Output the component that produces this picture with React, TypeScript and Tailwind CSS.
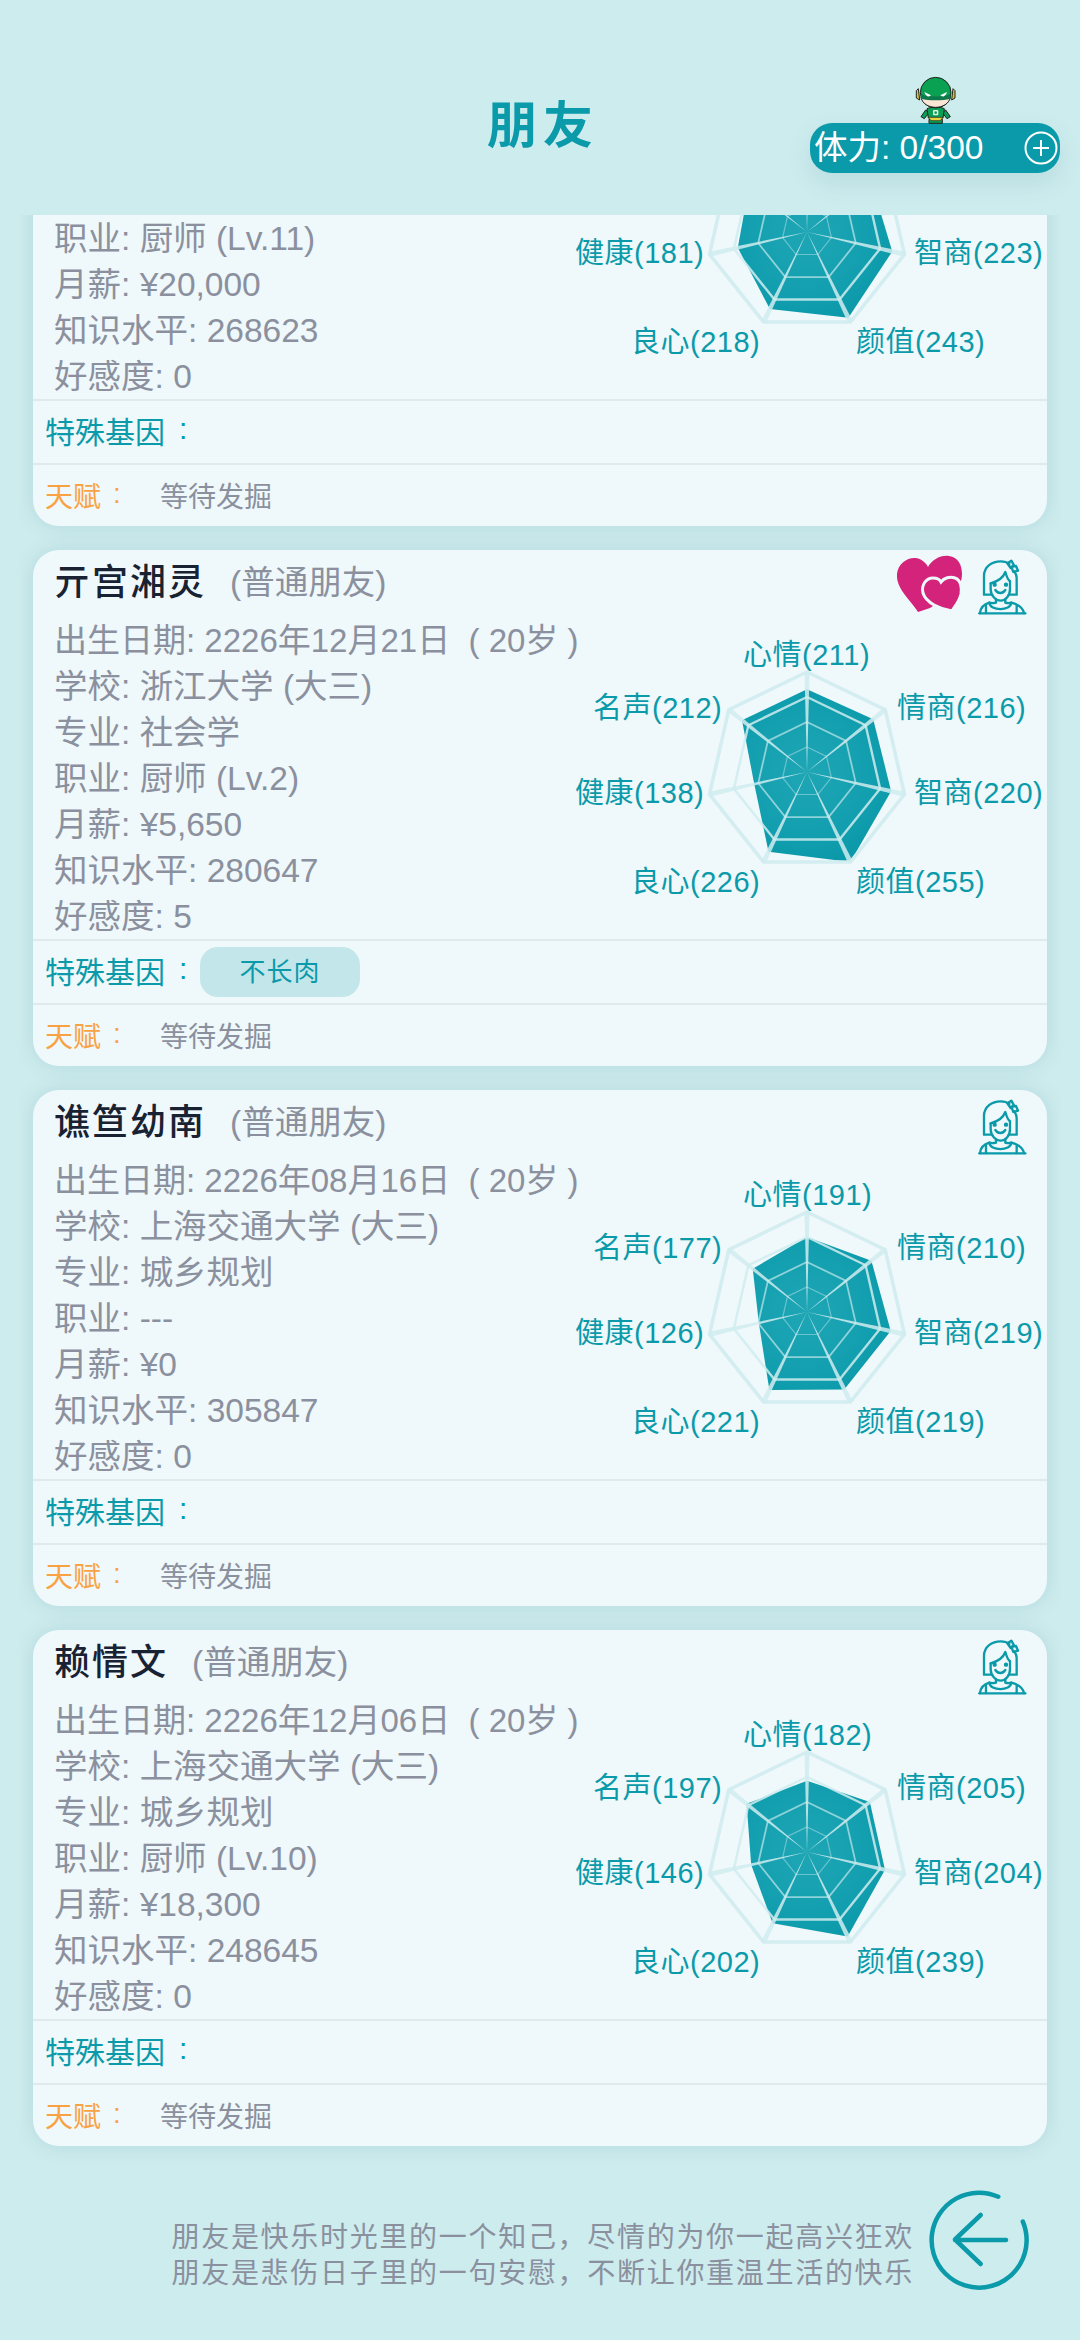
import React from "react";

const FONT = "font-['Liberation_Sans','Noto_Sans_CJK_SC',sans-serif]";

const labelPlaces = [
  "left-[173px] top-[19px]",
  "left-[327px] top-[72px]",
  "left-[344px] top-[157px]",
  "left-[286px] top-[246px]",
  "left-[61px] top-[246px]",
  "left-[5px] top-[157px]",
  "left-[23px] top-[72px]",
];

const statNames = ["心情", "情商", "智商", "颜值", "良心", "健康", "名声"];

const friends = [
  {
    name: "独孤若雪",
    hearts: false,
    birth: "2226年05月11日\u00a0 ( 20岁 )",
    school: "复旦大学 (大三)",
    major: "食品科学",
    job: "厨师 (Lv.11)",
    pay: "¥20,000",
    level: "268623",
    favor: "0",
    gene: "",
    stats: [210, 209, 223, 243, 218, 181, 189],
  },
  {
    name: "亓宫湘灵",
    hearts: true,
    birth: "2226年12月21日\u00a0 ( 20岁 )",
    school: "浙江大学 (大三)",
    major: "社会学",
    job: "厨师 (Lv.2)",
    pay: "¥5,650",
    level: "280647",
    favor: "5",
    gene: "不长肉",
    stats: [211, 216, 220, 255, 226, 138, 212],
  },
  {
    name: "谯笪幼南",
    hearts: false,
    birth: "2226年08月16日\u00a0 ( 20岁 )",
    school: "上海交通大学 (大三)",
    major: "城乡规划",
    job: "---",
    pay: "¥0",
    level: "305847",
    favor: "0",
    gene: "",
    stats: [191, 210, 219, 219, 221, 126, 177],
  },
  {
    name: "赖情文",
    hearts: false,
    birth: "2226年12月06日\u00a0 ( 20岁 )",
    school: "上海交通大学 (大三)",
    major: "城乡规划",
    job: "厨师 (Lv.10)",
    pay: "¥18,300",
    level: "248645",
    favor: "0",
    gene: "",
    stats: [182, 205, 204, 239, 202, 146, 197],
  },
];

function point(i: number, r: number) {
  const a = (i * 2 * Math.PI) / 7;
  return [237 + r * Math.sin(a), 154 - r * Math.cos(a)];
}

function ring(r: number) {
  return [0, 1, 2, 3, 4, 5, 6].map((i) => point(i, r).join(",")).join(" ");
}

function Radar({ stats, id }: { stats: number[]; id: string }) {
  const shape = stats
    .map((v, i) => point(i, (v / 255) * 100).join(","))
    .join(" ");
  return (
    <svg className="absolute inset-0" width="474" height="322" viewBox="0 0 474 322">
      <defs>
        <radialGradient id={id} gradientUnits="userSpaceOnUse" cx="237" cy="154" r="100">
          <stop offset="0" stopColor="#1fa6b5" />
          <stop offset="0.55" stopColor="#14a0b0" />
          <stop offset="1" stopColor="#0998a8" />
        </radialGradient>
      </defs>
      <polygon points={shape} fill={`url(#${id})`} />
      <polygon points={ring(25)} fill="none" stroke="#cfecef" strokeOpacity="0.45" strokeWidth="1.2" />
      <polygon points={ring(50)} fill="none" stroke="#cfecef" strokeOpacity="0.65" strokeWidth="1.8" />
      <polygon points={ring(75)} fill="none" stroke="#cfecef" strokeOpacity="0.85" strokeWidth="2.4" />
      <polygon points={ring(100)} fill="none" stroke="#d3edf0" strokeWidth="3.5" />
      {stats.map((_, i) => {
        const [x, y] = point(i, 100);
        const a = (i * 2 * Math.PI) / 7;
        const nx = Math.cos(a) * 2.5;
        const ny = Math.sin(a) * 2.5;
        return (
          <polygon
            key={i}
            points={`237,154 ${x + nx},${y + ny} ${x - nx},${y - ny}`}
            fill="#cfecef"
            fillOpacity="0.85"
          />
        );
      })}
    </svg>
  );
}

function Hearts() {
  return (
    <svg width="80" height="70" viewBox="0 0 80 70" className="shrink-0">
      <path
        d="M28 60C20 47 6 37 7 22C8 11 18 5 26 6C32 7 36 11 38 15C42 8 50 3 59 4C68 5 72 13 72 22C72 30 68 36 64 40L40 56Z"
        fill="#d4237a"
      />
      <path
        d="M62 59C50 57 36 51 33 41C31 33 36 26 43 26C47 26 50 28 51 30C54 26 60 24 65 26C71 28 72 36 71 42C69 50 65 54 62 59Z"
        fill="#d4237a"
        stroke="#eff8fa"
        strokeWidth="3"
      />
    </svg>
  );
}

function Girl() {
  return (
    <svg
      width="60"
      height="65"
      viewBox="0 0 180 195"
      fill="none"
      stroke="#0a9aaa"
      strokeWidth="7"
      strokeLinecap="round"
      strokeLinejoin="round"
      className="shrink-0"
    >
      <path d="M62 128H42V72C42 44 66 28 92 28C104 28 112 31 118 36" />
      <path d="M133 58C137 64 140 70 140 78V128H120" />
      <path d="M62 94V112C62 132 78 146 92 146C106 146 120 132 120 112V88" />
      <path d="M62 94C84 88 100 76 106 60C110 74 114 84 120 88" />
      <path d="M112 34L124 26L132 40L122 48Z" />
      <path d="M124 44L138 42L144 56L130 60Z" />
      <circle cx="74" cy="98" r="3" fill="#0a9aaa" />
      <circle cx="108" cy="98" r="3" fill="#0a9aaa" />
      <path d="M76 114C84 126 98 126 106 114" />
      <path d="M78 142V152C70 154 64 154 58 152C44 156 32 166 30 183" />
      <path d="M106 142V152C112 154 118 154 124 152C140 156 158 166 162 183" />
      <path d="M48 183V162M58 152C60 178 122 178 124 152M140 183V162" />
      <path d="M28 184H166" />
    </svg>
  );
}

function Hero() {
  return (
    <svg width="60" height="60" viewBox="0 0 180 180" className="absolute left-[95px] top-[-53px]">
      <path d="M40 56L34 62V84L44 90Z" fill="#d7c83a" stroke="#222" strokeWidth="3" />
      <path d="M144 56L150 62V84L140 90Z" fill="#d7c83a" stroke="#222" strokeWidth="3" />
      <path d="M62 120L48 140L58 146L72 128Z" fill="#0a9f55" stroke="#222" strokeWidth="3" />
      <path d="M122 120L136 140L126 146L112 128Z" fill="#0a9f55" stroke="#222" strokeWidth="3" />
      <path d="M72 148H112V160H72Z" fill="#0a9f55" stroke="#222" strokeWidth="3" />
      <path d="M66 116C78 110 106 110 118 116L114 144H70Z" fill="#0a9f55" stroke="#222" strokeWidth="3" />
      <path d="M70 142H114L106 152H78Z" fill="#e6d53a" stroke="#222" strokeWidth="2" />
      <rect x="84" y="120" width="16" height="16" rx="3" fill="#d9f3e4" />
      <circle cx="92" cy="128" r="4" fill="#0a9f55" />
      <ellipse cx="92" cy="68" rx="46" ry="46" fill="#0aa252" stroke="#222" strokeWidth="3" />
      <path d="M48 82C52 102 72 112 92 112C112 112 132 102 136 82Z" fill="#fbe6d6" stroke="#222" strokeWidth="3" />
      <path d="M48 72C70 84 114 84 136 72L136 86C112 92 72 92 48 86Z" fill="#0c7a4c" />
      <path d="M58 66L78 76C72 82 62 80 58 66Z" fill="#fff" />
      <path d="M126 66L106 76C112 82 122 80 126 66Z" fill="#fff" />
    </svg>
  );
}

function FriendCard({ friend, index }: { friend: (typeof friends)[number]; index: number }) {
  return (
    <div className="bg-[#eff8fa] rounded-[26px] shadow-[0_0_22px_rgba(0,90,110,0.12)] overflow-hidden h-[516px] shrink-0 flex flex-col">
      <div className="h-[68px] shrink-0 flex items-start justify-between pl-[21px] pr-[17px] pt-[2px]">
        <div className="flex items-center h-[62px] whitespace-nowrap">
          <span className="text-[36px] tracking-[2px] font-medium text-[#182232]">{friend.name}</span>
          <span className="text-[33.5px] text-[#8b909e] ml-[24px]">(普通朋友)</span>
        </div>
        <div className="flex items-start gap-0">
          {friend.hearts && <Hearts />}
          <Girl />
        </div>
      </div>
      <div className="flex h-[321px] shrink-0">
        <div className="flex-1 min-w-0 pl-[21px] text-[33.5px] leading-[46px] text-[#8b909e] whitespace-nowrap">
          <div className="text-[33px]">出生日期: {friend.birth}</div>
          <div>学校: {friend.school}</div>
          <div>专业: {friend.major}</div>
          <div>职业: {friend.job}</div>
          <div>月薪: {friend.pay}</div>
          <div>知识水平: {friend.level}</div>
          <div>好感度: {friend.favor}</div>
        </div>
        <div className="relative w-[474px] h-[322px] shrink-0 mr-[3px]">
          <Radar stats={friend.stats} id={`fill${index}`} />
          {friend.stats.map((v, i) => (
            <div
              key={statNames[i]}
              className={`absolute h-[36px] leading-[36px] text-[29px] tracking-[0.5px] text-[#0a9aaa] whitespace-nowrap ${labelPlaces[i]}`}
            >
              {statNames[i]}({v})
            </div>
          ))}
        </div>
      </div>
      <div className="h-[64px] shrink-0 border-t-2 border-[#deeaed] flex items-center pl-[12px]">
        <span className="text-[30px] text-[#0a9aaa] w-[155px] shrink-0">
          特殊基因<span className="ml-[14px] relative top-[-4px]">:</span>
        </span>
        {friend.gene && (
          <span className="w-[160px] h-[50px] rounded-[18px] bg-[#c2e6ea] text-[#0a9aaa] text-[26px] flex items-center justify-center tracking-[1px]">
            {friend.gene}
          </span>
        )}
      </div>
      <div className="flex-1 border-t-2 border-[#deeaed] flex items-center pl-[12px] pt-[4px]">
        <span className="text-[28px] text-[#f9a243] w-[115px] shrink-0">
          天赋<span className="ml-[12px] relative top-[-4px]">:</span>
        </span>
        <span className="text-[28px] text-[#8b909e]">等待发掘</span>
      </div>
    </div>
  );
}

export default function App() {
  return (
    <div className={`w-[1080px] h-[2340px] bg-[#cdecee] flex flex-col ${FONT}`}>
      {/* Header */}
      <div className="h-[215px] shrink-0 relative flex items-start justify-center pt-[89px]">
        <h1 className="text-[50px] leading-[74px] font-bold tracking-[6px] text-[#0a9aaa] pl-[6px]">朋友</h1>
        <div className="absolute left-[810px] top-[123px] w-[250px] h-[50px] rounded-[22px] bg-[#0a9aaa] shadow-[0_10px_26px_rgba(0,90,110,0.1)] flex items-center justify-between pl-[4px] pr-[1px] text-white text-[33.5px]">
          <Hero />
          <span className="whitespace-nowrap">体力: 0/300</span>
          <svg width="36" height="36" viewBox="0 0 36 36" fill="none" stroke="#fff" strokeWidth="2">
            <circle cx="18" cy="18" r="15.5" />
            <path d="M10 18H26M18 10V26" />
          </svg>
        </div>
      </div>

      {/* Friend list, scrolled part way through the first card */}
      <div className="h-[1953px] shrink-0 mx-[20px] px-[13px] overflow-hidden">
        <div className="-mt-[205px] flex flex-col gap-[24px]">
          {friends.map((f, i) => (
            <FriendCard key={f.name} friend={f} index={i} />
          ))}
        </div>
      </div>

      {/* Footer */}
      <div className="flex-1 flex items-start justify-end pr-[40px] pt-[12px]">
        <div className="text-[28px] leading-[36px] tracking-[1.7px] text-[#8b909e] mt-[40px] mr-[6px] whitespace-nowrap">
          <div>朋友是快乐时光里的一个知己{"\uff0c"}尽情的为你一起高兴狂欢</div>
          <div>朋友是悲伤日子里的一句安慰{"\uff0c"}不断让你重温生活的快乐</div>
        </div>
        <svg width="120" height="120" viewBox="0 0 120 120" fill="none" stroke="#0a9aaa" strokeWidth="4.5" strokeLinecap="round" strokeLinejoin="round" className="shrink-0">
          <path d="M78.3 16.7A47.5 47.5 0 1 0 102.8 41.5" />
          <path d="M60.7 35L35 59.5L60.7 84M35 60H86" />
        </svg>
      </div>
    </div>
  );
}
